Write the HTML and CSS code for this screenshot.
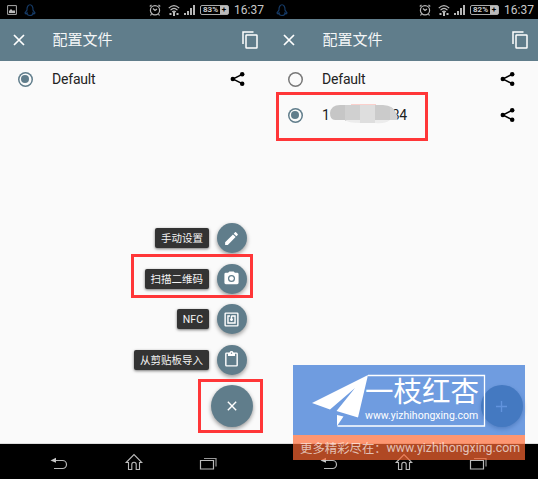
FILE: index.html
```html
<!DOCTYPE html>
<html lang="zh-CN">
<head>
<meta charset="utf-8">
<title>配置文件</title>
<link rel="stylesheet" href="styles.css">
</head>
<body>
<svg class="defs" aria-hidden="true">
  <symbol id="penguin" viewBox="0 0 14 14"><path d="M4 7C3.500 0 10.500 0 10 7l2 3-1 1-1-1q0 2.500-3 2.500T4 10l-1 1-1-1z" fill="none" stroke="#153a66" stroke-width="1.200"/></symbol>
  <symbol id="picture" viewBox="0 0 10 10"><path d="M.6.6h8.800v8.800H.6z" fill="none" stroke="#aaa"/><path d="M2 8V6l2-2 2 2 1-1 1 1v2z" fill="#bbb"/></symbol>
  <symbol id="alarm" viewBox="0 0 12 12"><g fill="none" stroke="#b5b5b5" stroke-width="1.200"><circle cx="6" cy="6.200" r="4.600"/><path d="M.8 2.500 2.500.9M11.200 2.500 9.500.9M2.500 10 1.500 11.500M9.500 10l1 1.500M4 4.500l2 2 2-1.500"/></g></symbol>
  <symbol id="wifi" viewBox="0 0 12 12"><g fill="none" stroke="#bbb" stroke-width="1.200"><path d="M.8 4.200q5.200-5.200 10.400 0M2.500 6.200q3.500-3.500 7 0M4.200 8q1.800-1.600 3.600 0"/></g><path d="M5 8h2v4H5zM1.500 9h2v2h-2zM8.500 9h2v2h-2z" fill="#bbb"/></symbol>
  <symbol id="signal" viewBox="0 0 12 11"><path d="M0 9h2v2H0zM3 7h2v4H3zM6 4h2v7H6zM9 1h2v10H9z" fill="#b5b5b5"/></symbol>
  <symbol id="close" viewBox="0 0 12 12"><path d="m1 1 10 10M11 1 1 11" fill="none" stroke="#fff" stroke-width="1.700"/></symbol>
  <symbol id="plus" viewBox="0 0 12 12"><path d="M6 0v12M0 6h12" fill="none" stroke="#c9d9ef" stroke-width="1.500"/></symbol>
  <symbol id="copy" viewBox="0 0 16 18"><path d="M1 13V1h10.500" fill="none" stroke="#fff" stroke-width="1.500"/><rect x="4" y="4" width="11" height="13" rx=".6" fill="none" stroke="#fff" stroke-width="1.500"/></symbol>
  <symbol id="share" viewBox="0 0 16 16"><path d="M13 3 3 8l10 5" fill="none" stroke="#000" stroke-width="1.500"/><circle cx="13" cy="3" r="2.400"/><circle cx="3" cy="8" r="2.400"/><circle cx="13" cy="13" r="2.400"/></symbol>
  <symbol id="edit" viewBox="0 0 24 24"><path d="M3 17.250V21h3.750L17.810 9.940l-3.750-3.750zM20.710 7.040a1 1 0 0 0 0-1.410l-2.340-2.340a1 1 0 0 0-1.410 0l-1.830 1.830 3.750 3.750z" fill="#fff"/></symbol>
  <symbol id="camera" viewBox="0 0 24 24"><circle cx="12" cy="12" r="3.200" fill="#fff"/><path d="M9 2 7.170 4H4a2 2 0 0 0-2 2v12a2 2 0 0 0 2 2h16a2 2 0 0 0 2-2V6a2 2 0 0 0-2-2h-3.170L15 2zm3 15a5 5 0 1 1 0-10 5 5 0 0 1 0 10z" fill="#fff"/></symbol>
  <symbol id="nfc" viewBox="0 0 24 24"><path d="M20 2H4a2 2 0 0 0-2 2v16a2 2 0 0 0 2 2h16a2 2 0 0 0 2-2V4a2 2 0 0 0-2-2zm0 18H4V4h16zM18 6h-5a2 2 0 0 0-2 2v2.280a2 2 0 1 0 2 0V8h3v8H8V8h2V6H6v12h12z" fill="#fff"/></symbol>
  <symbol id="paste" viewBox="0 0 24 24"><path d="M19 2h-4.180a3 3 0 0 0-5.640 0H5a2 2 0 0 0-2 2v16a2 2 0 0 0 2 2h14a2 2 0 0 0 2-2V4a2 2 0 0 0-2-2zm-7 0a1 1 0 1 1 0 2 1 1 0 0 1 0-2zm7 18H5V4h2v3h10V4h2z" fill="#fff"/></symbol>
  <symbol id="back" viewBox="0 0 18 18"><path d="M5 7.500h7.500a4 4 0 0 1 0 8H4" fill="none" stroke="#b8b8b8" stroke-width="1.200"/><path d="M.5 7.500 6 4.800v5z" fill="#c8c8c8"/></symbol>
  <symbol id="home" viewBox="0 0 18 18"><path d="M1.200 9.500 9 1.500l7.800 8h-2.300v7h-3.300v-5a2.200 2.200 0 0 0-4.400 0v5H3.500v-7z" fill="none" stroke="#bbb" stroke-width="1.100"/></symbol>
  <symbol id="recents" viewBox="0 0 18 18"><path d="M1.500 7.500h13v8.500h-13z" fill="none" stroke="#bbb" stroke-width="1.200"/><path d="M5 5.500h12v8" fill="none" stroke="#999" stroke-width="1.200"/></symbol>
</svg>

<main class="screens">
  <section class="phone">
    <div class="status">
      <svg class="s-picture"><use href="#picture"/></svg>
      <svg class="s-penguin"><use href="#penguin"/></svg>
      <div class="indicators">
        <svg class="s-alarm"><use href="#alarm"/></svg>
        <svg class="s-wifi"><use href="#wifi"/></svg>
        <svg class="s-signal"><use href="#signal"/></svg>
        <span class="battery"><b>83%</b><i>+</i></span>
        <span class="clock">16:37</span>
      </div>
    </div>
    <header class="toolbar">
      <svg class="t-close"><use href="#close"/></svg>
      <h1>配置文件</h1>
      <svg class="t-copy"><use href="#copy"/></svg>
    </header>
    <div class="content">
      <div class="profile"><span class="radio checked"></span><span class="name">Default</span><svg class="share"><use href="#share"/></svg></div>
      <div class="actions">
        <div class="action"><span class="label">手动设置</span><span class="mini"><svg><use href="#edit"/></svg></span></div>
        <div class="action"><span class="label">扫描二维码</span><span class="mini"><svg><use href="#camera"/></svg></span></div>
        <div class="action"><span class="label">NFC</span><span class="mini"><svg><use href="#nfc"/></svg></span></div>
        <div class="action"><span class="label">从剪贴板导入</span><span class="mini"><svg><use href="#paste"/></svg></span></div>
        <div class="fab"><svg><use href="#close"/></svg></div>
      </div>
    </div>
    <nav class="navbar">
      <svg><use href="#back"/></svg><svg><use href="#home"/></svg><svg><use href="#recents"/></svg>
    </nav>
    <div class="mark mark-scan"></div>
    <div class="mark mark-fab"></div>
  </section>

  <section class="phone second">
    <div class="status">
      <svg class="s-penguin"><use href="#penguin"/></svg>
      <div class="indicators">
        <svg class="s-alarm"><use href="#alarm"/></svg>
        <svg class="s-wifi"><use href="#wifi"/></svg>
        <svg class="s-signal"><use href="#signal"/></svg>
        <span class="battery"><b>82%</b><i>+</i></span>
        <span class="clock">16:37</span>
      </div>
    </div>
    <header class="toolbar">
      <svg class="t-close"><use href="#close"/></svg>
      <h1>配置文件</h1>
      <svg class="t-copy"><use href="#copy"/></svg>
    </header>
    <div class="content">
      <div class="profile"><span class="radio"></span><span class="name">Default</span><svg class="share"><use href="#share"/></svg></div>
      <div class="profile"><span class="radio checked"></span><span class="name masked"><span>1</span><span>34</span>
        <svg class="mosaic" viewBox="0 0 70 22"><path d="M21 1h25v3H21z" fill="#fbd0cc"/><path d="M0 10Q1 2 10 2h6v15H5Q0 17 0 10z" fill="#c6c6c6"/><path d="M15 2h15v16H15z" fill="#d0d0d0"/><path d="M30 2h15v18H30z" fill="#dedede"/><path d="M45 2h8q11 1 12 7v8H45z" fill="#cbcbcb"/><path d="M60 4q8 4 7.500 13H60z" fill="#d3d3d3"/><path d="M15 17h15v3q-12 0-15-3zM45 17h15q-5 4-15 3z" fill="#ececec"/></svg>
      </span><svg class="share"><use href="#share"/></svg></div>
      <div class="actions"><div class="fab"><svg class="plus"><use href="#plus"/></svg></div></div>
    </div>
    <nav class="navbar">
      <svg><use href="#back"/></svg><svg><use href="#home"/></svg><svg><use href="#recents"/></svg>
    </nav>
    <div class="mark mark-profile"></div>
    <aside class="watermark">
      <div class="brand">
        <svg class="plane" viewBox="0 0 232 70"><path d="M75 10.500h116.500v50.500H44.500" fill="none" stroke="#fff" stroke-width="1.300"/><path d="M19 38 75 10 65 52.500 43.500 46 62 23 37 44.500zM44 50l6.500 1.500L44 61z" fill="#fff"/></svg>
        <div class="words"><strong>一枝红杏</strong><span>www.yizhihongxing.com</span></div>
      </div>
      <div class="tagline"><span class="more">更多精彩尽在：</span><span class="url">www.yizhihongxing.com</span></div>
    </aside>
  </section>
</main>
</body>
</html>
```
FILE: styles.css
```css
* { box-sizing: border-box; }
body { margin: 0; width: 538px; height: 479px; overflow: hidden; background: #000; font-family: Roboto, "Noto Sans CJK SC", sans-serif; }
svg { display: block; flex: none; }
.defs { position: absolute; width: 0; height: 0; }
.screens { display: grid; grid-template-columns: 270px 270px; }
.phone { position: relative; display: grid; grid-template-rows: 19px 42px 383px 35px; height: 479px; }

.status { display: flex; align-items: center; background: #000; padding-left: 7px; }
.second .status { padding-left: 5px; }
.s-picture { width: 10px; height: 10px; margin-right: 6px; }
.s-penguin { width: 14px; height: 14px; }
.indicators { display: flex; align-items: center; margin-left: auto; padding-right: 7px; }
.s-alarm { width: 12px; height: 12px; margin-right: 7px; }
.s-wifi { width: 12px; height: 12px; margin-right: 4px; }
.s-signal { width: 12px; height: 11px; margin-right: 4px; }
.battery { display: flex; width: 29px; height: 10px; border: 1px solid #aaa; border-radius: 2px; margin-right: 5px; color: #ccc; font-size: 8px; line-height: 8px; }
.battery b { flex: 1; text-align: center; font-size: 8px; }
.battery i { width: 8px; background: #bbb; color: #000; font-style: normal; font-weight: 700; text-align: center; }
.clock { width: 29px; padding-top: 1px; color: #c8c8c8; font-size: 12px; line-height: 18px; white-space: nowrap; }

.toolbar { display: flex; align-items: center; background: #607d8b; padding: 0 12px 0 13px; }
.t-close { width: 12px; height: 12px; }
.toolbar h1 { flex: 1; margin: 0 0 0 27.500px; color: #f4f6f7; font-size: 15px; line-height: 42px; font-weight: 400; }
.t-copy { width: 16px; height: 18px; }

.content { display: flex; flex-direction: column; background: #fafafa; border-bottom: 1px solid #ddd; }
.profile { display: flex; align-items: center; height: 36px; padding: 0 25px 0 17.500px; }
.radio { display: flex; align-items: center; justify-content: center; width: 15px; height: 15px; border-radius: 50%; box-shadow: inset 0 0 0 1.500px #777; }
.radio.checked { box-shadow: inset 0 0 0 1.500px #607d8b; }
.radio.checked::after { content: ""; width: 8px; height: 8px; border-radius: 50%; background: #607d8b; }
.name { flex: 1; margin-left: 19.500px; color: #222; font-size: 14px; line-height: 36px; letter-spacing: -.2px; }
.share { width: 15px; height: 16px; }
.masked { position: relative; }
.masked span:nth-child(2) { margin-left: 62px; }
.mosaic { position: absolute; left: 8px; top: 6px; width: 70px; height: 22px; }

.actions { display: flex; flex-direction: column; align-items: flex-end; margin-top: auto; padding: 0 17.500px 16px 0; }
.action { display: flex; align-items: center; gap: 7.500px; height: 30px; margin: 0 6px 10.400px 0; }
.label { height: 20px; padding: 0 6px; border-radius: 2px; background: #333; color: #f5f5f5; font-size: 10.500px; line-height: 21px; box-shadow: 0 1px 3px #0008; }
.mini { display: flex; align-items: center; justify-content: center; width: 30px; height: 30px; border-radius: 50%; background: #607d8b; box-shadow: 0 2px 4px #0006; }
.mini svg { width: 17px; height: 17px; }
.fab { display: flex; align-items: center; justify-content: center; width: 42px; height: 42px; border-radius: 50%; background: #607d8b; box-shadow: 0 2px 4px #0006; }
.fab svg { width: 10px; height: 10px; }
.fab .plus { width: 11px; height: 11px; }

.navbar { display: flex; justify-content: space-between; align-items: flex-start; background: #000; padding: 9px 53px 0 50px; }
.navbar svg { width: 18px; height: 18px; }

.mark { position: absolute; border: 3px solid #ff3638; }
.mark-scan { left: 131px; top: 254px; width: 122px; height: 44px; }
.mark-fab { left: 198px; top: 379px; width: 65px; height: 54px; }
.mark-profile { left: 6px; top: 92px; width: 152px; height: 49px; }

.watermark { position: absolute; left: 23px; top: 365px; width: 232px; height: 95px; }
.brand { position: relative; height: 70px; background: rgba(57, 119, 214, .72); }
.plane { position: absolute; inset: 0; width: 232px; height: 70px; }
.words { position: relative; display: flex; flex-direction: column; padding: 12px 0 0 72px; color: #fff; white-space: nowrap; }
.words strong { font-size: 28.500px; line-height: 31px; font-weight: 400; }
.words span { font-size: 10.500px; line-height: 16px; }
.tagline { display: flex; align-items: center; height: 25px; padding-left: 7px; background: rgba(255, 104, 51, .69); color: rgba(255, 255, 255, .68); white-space: nowrap; }
.more { width: 86.500px; font-size: 12.400px; }
.url { font-size: 12.400px; }
```
